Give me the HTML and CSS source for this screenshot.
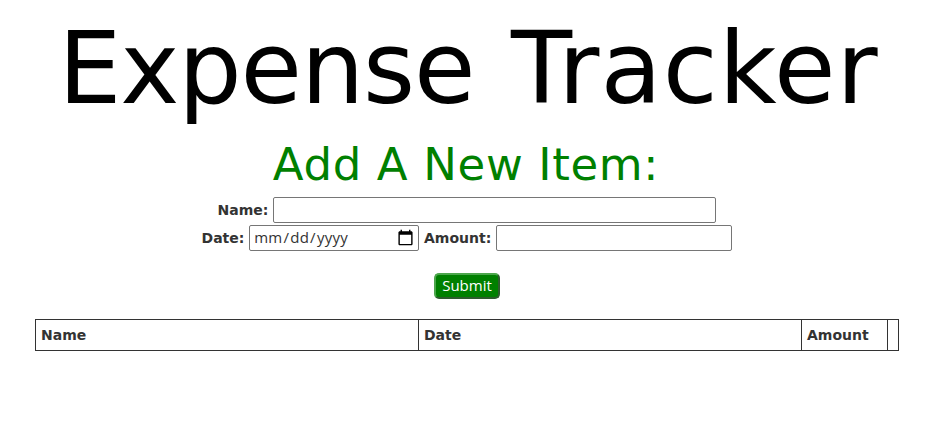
FILE: index.html
```html
<!DOCTYPE html>
<html lang="en">
<head>
<meta charset="utf-8">
<title>Expense Tracker</title>
<link rel="stylesheet" href="styles.css">
</head>
<body>
<h1>Expense <span class="loose">Tracker</span></h1>
<h2>Add A New Item:</h2>
<form>
  <div class="row row-name">
    <label for="name">Name:</label>
    <input id="name" class="name" type="text">
  </div>
  <div class="row row-date">
    <label for="date">Date:</label>
    <input id="date" class="date" type="date">
    <label for="amount">Amount:</label>
    <input id="amount" class="amount" type="text">
  </div>
  <button type="button">Submit</button>
</form>
<table>
  <colgroup><col class="c-name"><col class="c-date"><col class="c-amount"><col class="c-delete"></colgroup>
  <thead>
    <tr><th>Name</th><th>Date</th><th>Amount</th><th></th></tr>
  </thead>
</table>
</body>
</html>
```

FILE: styles.css
```css
* { box-sizing: border-box; }
body {
  margin: 0;
  padding-top: 9px;
  width: 934px;
  font: 14px/20px "DejaVu Sans", Verdana, sans-serif;
  color: #333;
}
h1, h2 { margin: 0; font-weight: 400; text-align: center; white-space: nowrap; }
h1 { font-size: 100px; line-height: 120px; color: #000; letter-spacing: -1.2px; word-spacing: 6px; padding-left: 3px; }
.loose { letter-spacing: 1px; }
h2 { font-size: 45px; line-height: 60px; color: green; margin-top: 6px; padding-right: 2px; letter-spacing: 0.65px; }
form { display: flex; flex-direction: column; align-items: center; gap: 2px; padding-top: 2px; }
.row { display: flex; align-items: center; gap: 5px; height: 26px; }
.row-date { gap: 4.8px; padding-right: 0.4px; }
label { font-weight: 700; }
input {
  height: 26px;
  margin: 0;
  padding: 1px 3px;
  border: 1px solid #767676;
  border-radius: 2px;
  font: 15px "Open Sans", sans-serif;
  color: #333;
  background: #fff;
}
.name { width: 443px; }
.date { width: 170px; padding: 0 3px 2px; letter-spacing: 0.25px; }
.date::-webkit-calendar-picker-indicator { width: 17px; height: 17px; padding: 0; margin-right: 1px; background-size: 17px 17px; }
.amount { width: 236px; }
button {
  width: 66px;
  height: 26px;
  margin-top: 20px;
  padding: 0 0 2px;
  border: 2px solid;
  border-color: #4ca64c #2e5c2e #2e5c2e #4ca64c;
  border-radius: 5px;
  background: green;
  color: #fff;
  font: 15px/20px "Open Sans", sans-serif;
}
table {
  width: 864px;
  margin: 20px 0 0 35px;
  border-collapse: collapse;
  table-layout: fixed;
}
th { height: 31px; padding: 0 5px; border: 1px solid #333; text-align: left; }
.c-name, .c-date { width: 383px; }
.c-amount { width: 86px; }
.c-delete { width: 11px; }
```
